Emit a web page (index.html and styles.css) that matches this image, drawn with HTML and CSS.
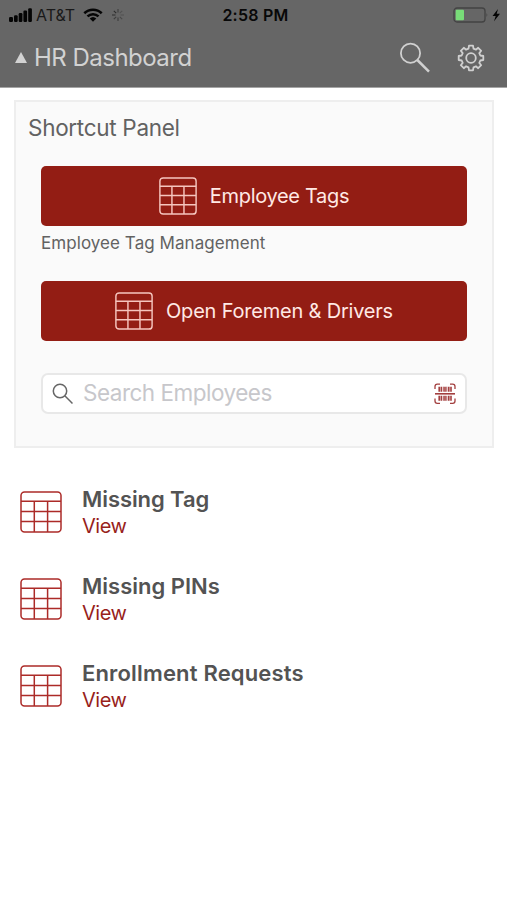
FILE: index.html
```html
<!DOCTYPE html>
<html lang="en">
<head>
<meta charset="utf-8">
<title>HR Dashboard</title>
<link rel="stylesheet" href="styles.css">
</head>
<body>
<svg class="defs" width="0" height="0" aria-hidden="true">
  <symbol id="table" viewBox="0 0 42 42">
    <rect x="1" y="1" width="40" height="40" rx="3.5"/>
    <path d="M1 10.2H41M1 20.4H41M1 30.6H41M14.3 10.2V41M27.6 10.2V41"/>
  </symbol>
</svg>
<header class="header">
  <div class="status">
    <div class="status-left">
      <svg class="signal" width="24" height="14" viewBox="0 0 24 14"><rect x="0" y="9" width="4" height="5" rx="1.2"/><rect x="5" y="7.2" width="3.7" height="6.8" rx="1.2"/><rect x="9.7" y="5" width="3.7" height="9" rx="1.2"/><rect x="14.4" y="2.5" width="3.7" height="11.5" rx="1.2"/><rect x="19.2" y="0.2" width="3.7" height="13.8" rx="1.2"/></svg>
      <span class="carrier">AT&amp;T</span>
      <svg class="wifi" width="20" height="14" viewBox="0 0 20 14"><path d="M1.3 5.2A12.6 12.6 0 0 1 18.7 5.2M4.5 8.4A8 8 0 0 1 15.5 8.4"/><path class="dot" d="M10 13.7L6.7 10.5A4.8 4.8 0 0 1 13.3 10.5Z"/></svg>
      <svg class="spinner" width="14" height="14" viewBox="0 0 14 14"><path opacity=".7" d="M7 1V4.5"/><path opacity=".35" d="M11.2 2.8L8.8 5.2M13 7H9.5"/><path opacity=".5" d="M11.2 11.2L8.8 8.8"/><path opacity=".7" d="M7 13V9.5M2.8 11.2L5.2 8.8"/><path d="M1 7H4.5M2.8 2.8L5.2 5.2"/></svg>
    </div>
    <span class="time">2:58 PM</span>
    <div class="status-right">
      <svg width="49" height="18" viewBox="0 0 49 18"><rect x="1" y="2" width="31" height="14" rx="3" fill="none" stroke="#434343" stroke-width="1.3"/><path d="M33.5 7Q35.3 9 33.5 11Z" fill="#434343"/><rect x="2.7" y="3.8" width="8.3" height="10.4" rx="1" fill="#78dc78"/><path d="M45 3L39.5 10H42.7L41 15.2L47 7.8H43.7Z" fill="#050505"/></svg>
    </div>
  </div>
  <div class="nav">
    <span class="caret"></span>
    <h1 class="title">HR Dashboard</h1>
    <svg class="nav-search" width="32" height="32" viewBox="0 0 32 32"><circle cx="11.5" cy="11.2" r="9.6"/><path class="handle" d="M18.3 18L30 29.7"/></svg>
    <svg class="gear" width="28" height="28" viewBox="-14 -14 28 28"><path d="M-2 -12.3H2L2.5 -9.3L4.9 -8.3L7.2 -10.2L10.2 -7.2L8.3 -4.9L9.3 -2.5L12.3 -2V2L9.3 2.5L8.3 4.9L10.2 7.2L7.2 10.2L4.9 8.3L2.5 9.3L2 12.3H-2L-2.5 9.3L-4.9 8.3L-7.2 10.2L-10.2 7.2L-8.3 4.9L-9.3 2.5L-12.3 2V-2L-9.3 -2.5L-8.3 -4.9L-10.2 -7.2L-7.2 -10.2L-4.9 -8.3L-2.5 -9.3Z"/><circle r="4.8"/></svg>
  </div>
</header>
<main>
  <section class="panel">
    <h2 class="panel-title">Shortcut Panel</h2>
    <button class="action"><svg class="table"><use href="#table"/></svg><span class="label-tags">Employee Tags</span></button>
    <p class="caption">Employee Tag Management</p>
    <button class="action"><svg class="table"><use href="#table"/></svg><span class="label-open">Open Foremen &amp; Drivers</span></button>
    <div class="search">
      <svg width="22" height="22" viewBox="0 0 22 22" class="search-icon"><circle cx="8" cy="8" r="6.7"/><path d="M12.8 12.8L20.5 20.5"/></svg>
      <span class="placeholder">Search Employees</span>
      <svg class="barcode" width="22" height="22" viewBox="0 0 22 22"><path class="frame" d="M1 6V3.5Q1 1.2 3.3 1.2H6M16 1.2H18.7Q21 1.2 21 3.5V6M1 15.5V18Q1 20.3 3.3 20.3H6M16 20.3H18.7Q21 20.3 21 18V15.5"/><path class="line" d="M1 10.8H21"/><path class="bars" d="M5.2 3.7V8.7M7.3 3.7V8.7M11 3.7V8.7M14.8 3.7V8.7M17 3.7V8.7M5.2 12.8V17.8M7.3 12.8V17.8M11 12.8V17.8M14.8 12.8V17.8M17 12.8V17.8"/><path class="thin" d="M9.3 3.7V8.7M12.8 3.7V8.7M9.3 12.8V17.8M12.8 12.8V17.8"/></svg>
    </div>
  </section>
  <ul class="list">
    <li class="row"><svg class="table"><use href="#table"/></svg><div><h3 class="tag">Missing Tag</h3><a>View</a></div></li>
    <li class="row"><svg class="table"><use href="#table"/></svg><div><h3 class="pins">Missing PINs</h3><a>View</a></div></li>
    <li class="row"><svg class="table"><use href="#table"/></svg><div><h3 class="requests">Enrollment Requests</h3><a>View</a></div></li>
  </ul>
</main>
</body>
</html>
```
FILE: styles.css
```css
* { box-sizing: border-box; margin: 0; padding: 0; }
body { background: #fff; font-family: Inter, "Liberation Sans", sans-serif; color: #626262; height: 900px; overflow: hidden; }
svg { display: block; flex: none; fill: none; }
.defs { position: absolute; }
h1, h2, h3 { font-weight: 400; white-space: nowrap; }
.header { height: 88px; background: #666; border-bottom: 1px solid #a5a5a5; }
.status { height: 30px; display: grid; grid-template-columns: 1fr auto 1fr; align-items: center; padding: 0 5px 0 9px; color: #080808; }
.status-left { display: flex; align-items: center; }
.signal { fill: #050505; }
.carrier { font-size: 16px; line-height: 20px; margin-left: 3px; width: 39px; letter-spacing: 0; color: #191919; }
.wifi { margin-left: 8px; stroke: #050505; stroke-width: 2.6; }
.wifi .dot { fill: #050505; stroke: none; }
.spinner { margin-left: 8px; stroke: #2c2c2c; stroke-width: 1.1; }
.time { font-size: 16px; font-weight: 600; letter-spacing: .25px; }
.status-right { display: flex; justify-content: flex-end; }
.nav { height: 55px; display: flex; align-items: center; padding: 0 22px 0 15px; color: #d2d2d2; }
.caret { border: 6px solid transparent; border-top: 0; border-bottom: 11px solid #d2d2d2; }
.title { font-size: 24px; line-height: 30px; margin: 1px 0 0 7px; flex: 1; letter-spacing: -.52px; }
.nav-search { stroke: #d0d0d0; stroke-width: 1.8; margin-right: 26px; }
.nav-search .handle { stroke-width: 2.5; }
.gear { stroke: #d0d0d0; stroke-width: 1.8; stroke-linejoin: round; }
.panel { margin: 12px 13px 0 14px; height: 348px; background: #fafafa; border: 2px solid #eee; padding: 12px 25px 0; }
.panel-title { font-size: 22.5px; line-height: 28px; margin-left: -13px; letter-spacing: -.3px; }
.action { width: 426px; height: 60px; margin-top: 24px; border: 0; border-radius: 5px; background: #931d14; color: #ffe9e5; display: flex; align-items: center; justify-content: center; gap: 13px; font: 20px Inter, sans-serif; white-space: nowrap; }
.action .table { width: 38px; height: 38px; stroke: #f6c5be; stroke-width: 1.6; }
.label-tags { letter-spacing: -.32px; }
.label-open { letter-spacing: -.2px; }
.caption { font-size: 17px; line-height: 24px; margin-top: 5px; white-space: nowrap; letter-spacing: .06px; }
.caption + .action { margin-top: 26px; }
.search { width: 426px; height: 41px; margin-top: 32px; border: 2px solid #e8e8e8; border-radius: 7px; background: #fff; display: flex; align-items: center; padding: 0 9px; }
.search-icon { stroke: #666; stroke-width: 1.5; }
.placeholder { flex: 1; margin: -2px 0 0 9px; font-size: 22.5px; line-height: 28px; color: #c7c7cb; letter-spacing: -.5px; }
.barcode { stroke: #a33f3f; }
.frame { stroke-width: 1.3; }
.line { stroke-width: 1.6; }
.bars { stroke-width: 1.6; }
.thin { stroke-width: .9; }
.list { list-style: none; margin-top: 35px; }
.row { height: 87px; display: flex; padding-left: 20px; gap: 20px; }
.row .table { width: 42px; height: 42px; margin-top: 8px; stroke: #ac2b28; stroke-width: 1.5; }
.row h3 { font-size: 22px; line-height: 28px; font-weight: 600; color: #535353; margin-top: 2px; }
.row .tag { letter-spacing: -.08px; }
.row .requests { letter-spacing: .17px; }
.row a { display: block; font-size: 20px; line-height: 25px; color: #981f1c; letter-spacing: -.5px; margin-top: 1px; }
```
